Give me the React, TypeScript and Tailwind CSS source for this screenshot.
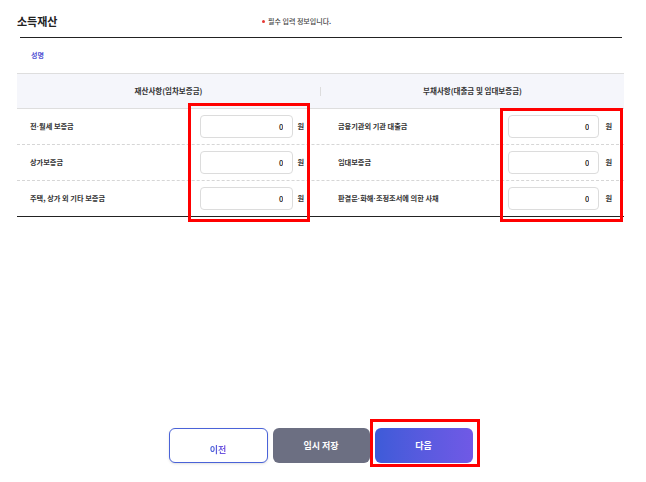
import React from 'react';

type Row = { label: React.ReactNode; value: string };

const Dot = () => <span className="font-['Liberation_Sans',sans-serif]">·</span>;

const assets: Row[] = [
  { label: <>전<Dot />월세 보증금</>, value: '0' },
  { label: '상가보증금', value: '0' },
  { label: '주택, 상가 외 기타 보증금', value: '0' },
];

const debts: Row[] = [
  { label: '금융기관외 기관 대출금', value: '0' },
  { label: '임대보증금', value: '0' },
  { label: <>판결문<Dot />화해<Dot />조정조서에 의한 사채</>, value: '0' },
];

function AmountCell({ row, side }: { row: Row; side: 'left' | 'right' }) {
  const isLeft = side === 'left';
  return (
    <div className={`flex items-center ${isLeft ? 'pl-[13px] pr-[16px]' : 'pl-[18px] pr-[12px]'}`}>
      <span className="flex-1 text-[7.2px] font-semibold text-[#333]">{row.label}</span>
      <input
        readOnly
        value={row.value}
        className={`${isLeft ? 'w-[93px]' : 'w-[91px]'} h-[23px] border border-[#dcdcdc] rounded-[4px] bg-white text-right pr-[9px] text-[7.5px] font-medium text-[#111] outline-none`}
      />
      <span className={`${isLeft ? 'ml-[4px]' : 'ml-[6px]'} text-[7.2px] font-semibold text-[#333]`}>원</span>
    </div>
  );
}

export default function App() {
  return (
    <div className="min-h-screen flex flex-col bg-white font-['Noto_Sans_CJK_KR',sans-serif] text-[#333] pl-[17px] pr-[22px]">
      {/* Header */}
      <div className="pt-[11px]">
        <div className="flex items-center h-[20px]">
          <h1 className="w-[245px] text-[11px] font-semibold text-[#222]">소득재산</h1>
          <p className="flex items-center text-[7px] font-medium text-[#444]">
            <span className="w-[3px] h-[3px] rounded-full bg-[#e53935] mr-[3px]" />
            필수 입력 정보입니다.
          </p>
        </div>
        <div className="mt-[6px] ml-[3px] mr-[2px] h-px bg-[#222]" />
        <div className="h-[35px] flex items-center pl-[14px] text-[7px] font-semibold text-[#5454d4]">성명</div>
      </div>

      {/* Table */}
      <div className="relative">
        <div className="flex items-center h-[36px] bg-[#f5f6fb] border-t border-b border-[#dedede] text-[7.5px] font-bold text-[#333]">
          <div className="w-[303px] text-center">재산사항(임차보증금)</div>
          <span className="w-px h-[9px] bg-[#dddddd]" />
          <div className="flex-1 text-center">부채사항(대출금 및 임대보증금)</div>
        </div>
        {assets.map((row, i) => (
          <div
            key={i}
            className={`grid grid-cols-[303px_1fr] h-[36px] ${
              i < assets.length - 1 ? 'border-b border-dashed border-[#d6d6d6]' : 'border-b border-[#222]'
            }`}
          >
            <AmountCell row={row} side="left" />
            <AmountCell row={debts[i]} side="right" />
          </div>
        ))}

        {/* annotation boxes */}
        <span className="absolute left-[171px] top-[30px] w-[122px] h-[119px] border-[3px] border-[#ff0000] pointer-events-none" />
        <span className="absolute left-[483px] top-[35px] w-[123px] h-[114px] border-[3px] border-[#ff0000] pointer-events-none" />
      </div>

      {/* Buttons */}
      <div className="mt-auto pb-[19px] flex justify-center gap-[5px]">
        <button className="w-[99px] h-[35px] rounded-[6px] border border-[#4a63d8] bg-white shadow-sm">
          <span className="bg-gradient-to-r from-[#3f5fd8] to-[#7a55e2] bg-clip-text text-transparent text-[9px] font-bold">
            이전
          </span>
        </button>
        <button className="w-[97px] h-[35px] rounded-[6px] bg-[#6c6f82] text-white text-[9px] font-bold">
          임시 저장
        </button>
        <div className="relative">
          <button className="w-[98px] h-[35px] rounded-[6px] bg-gradient-to-r from-[#3d5bd8] to-[#7059e6] text-white text-[9px] font-bold">
            다음
          </button>
          <span className="absolute -left-[5px] -right-[7px] -top-[9px] -bottom-[4px] border-[3px] border-[#ff0000] pointer-events-none" />
        </div>
      </div>
    </div>
  );
}
